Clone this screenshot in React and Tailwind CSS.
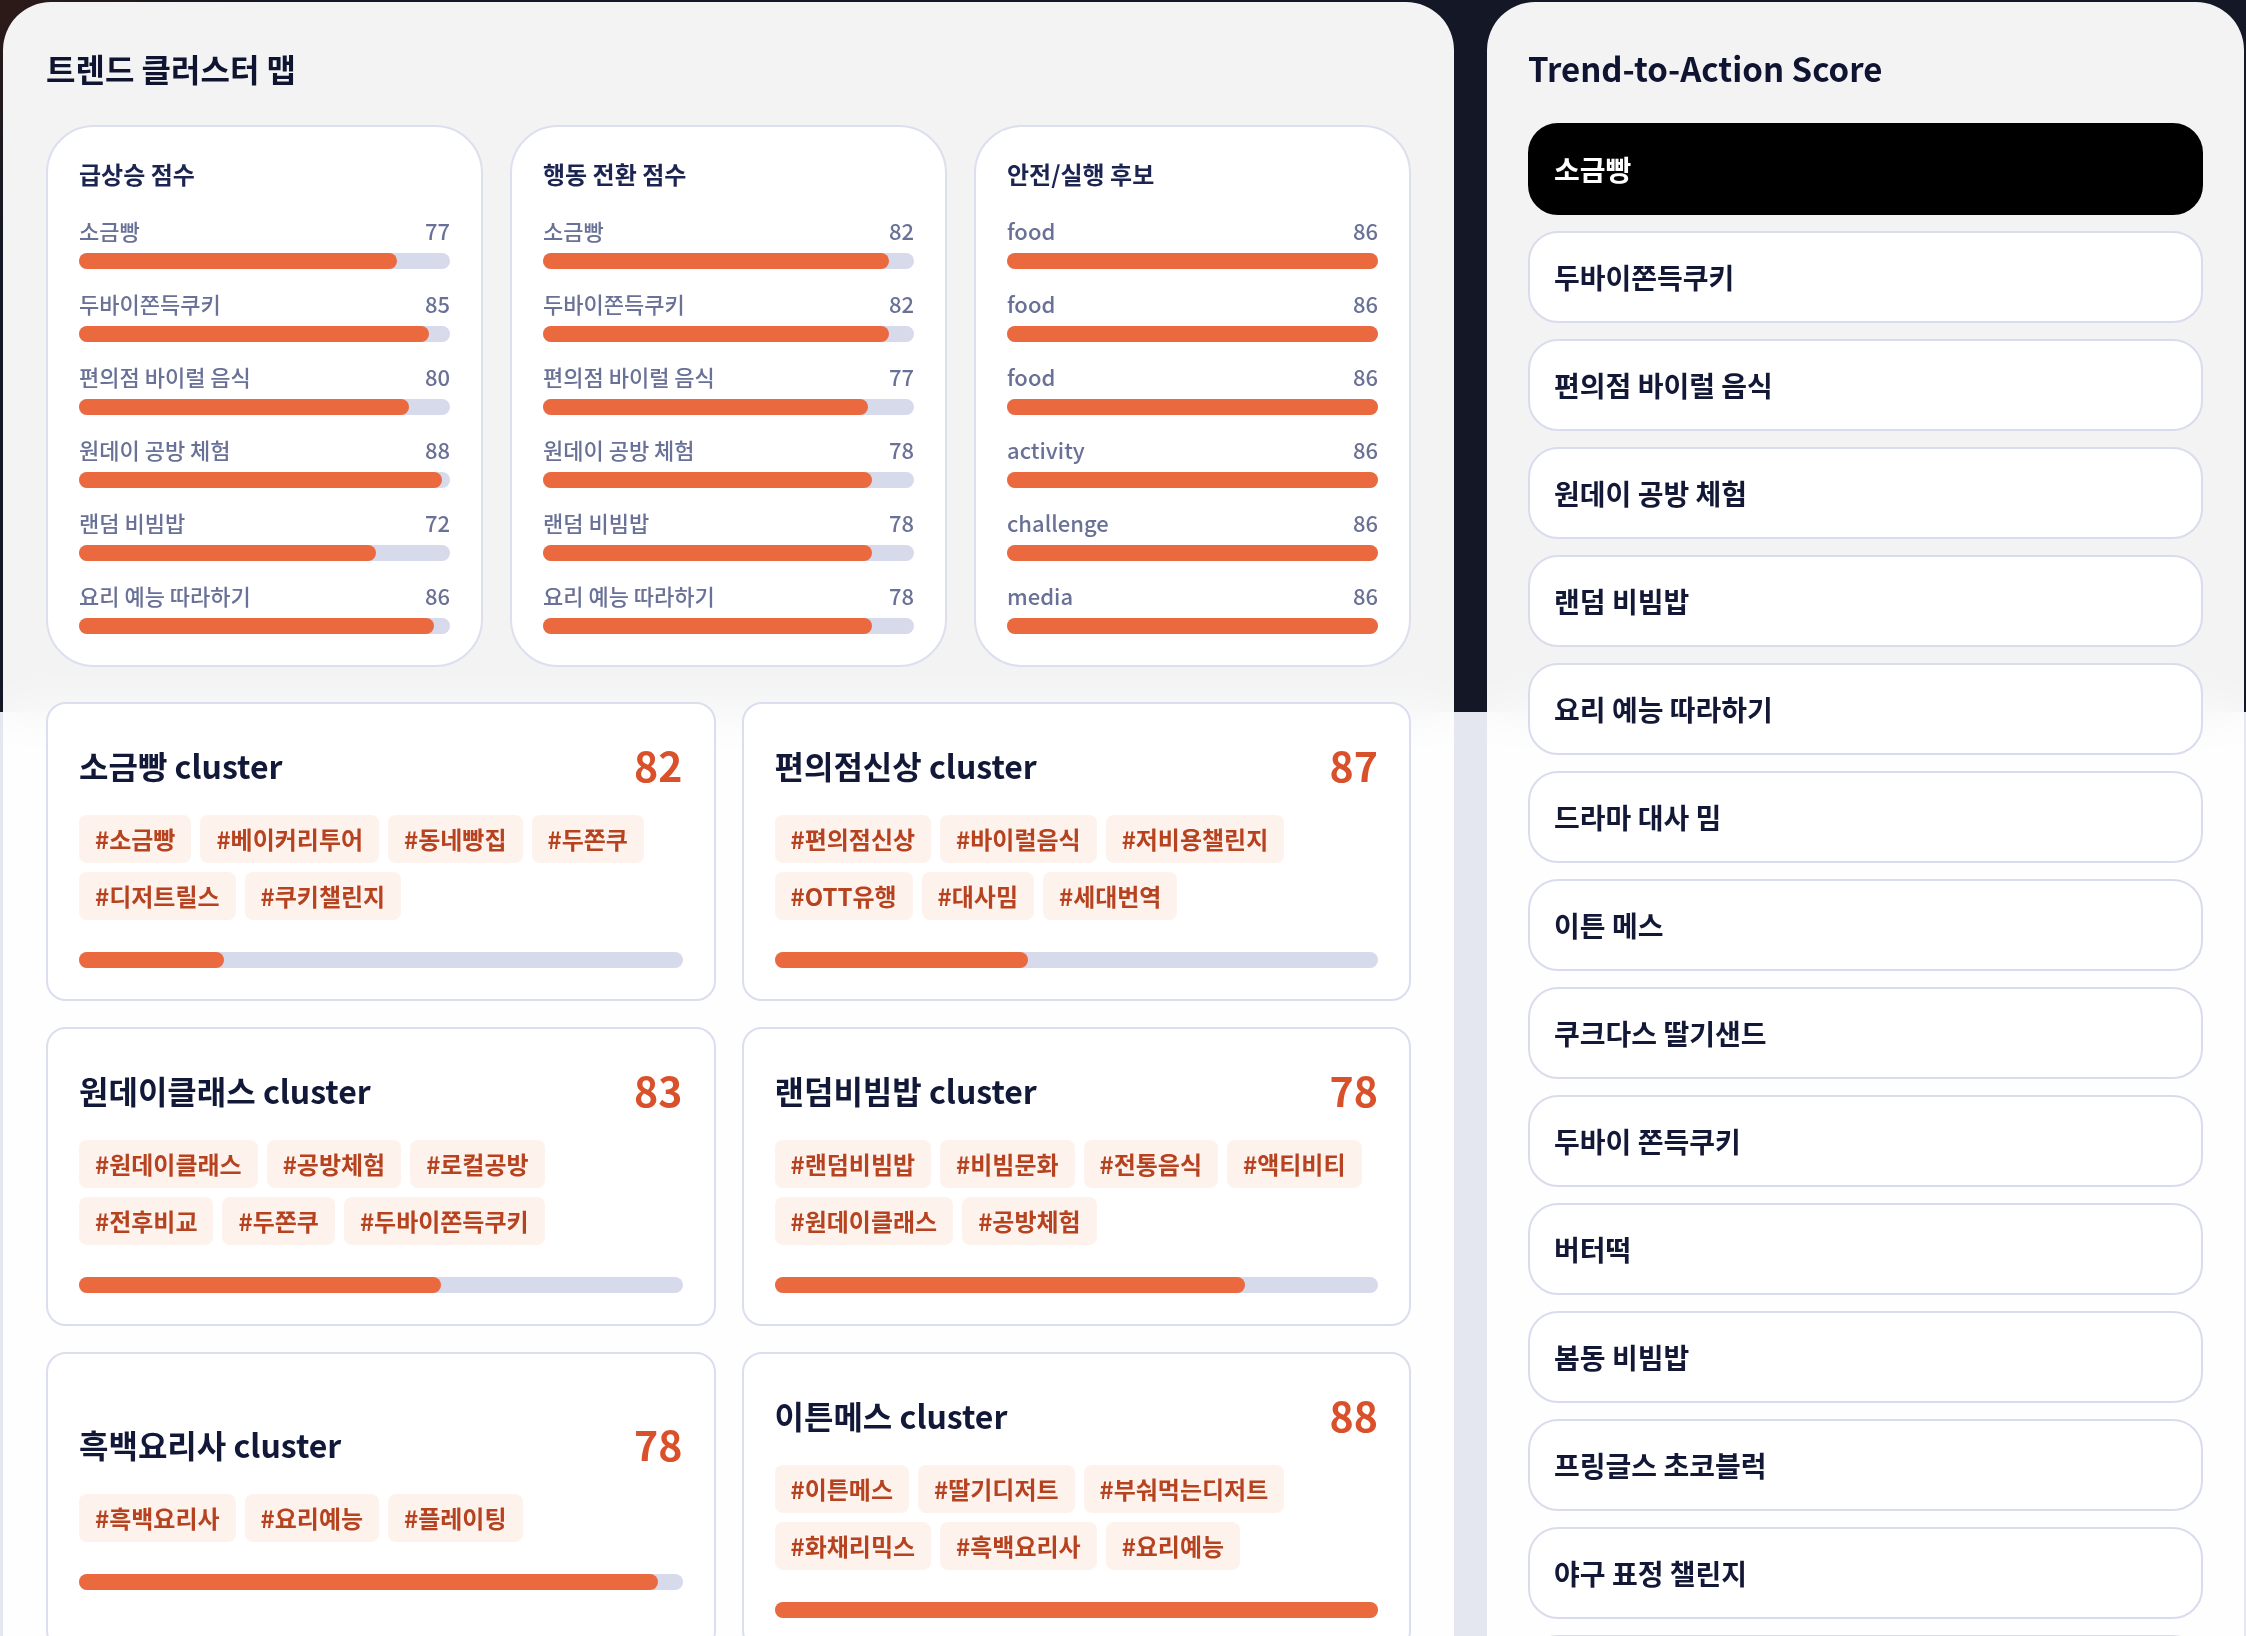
import React from "react";

const scoreCards = [
  {
    title: "급상승 점수",
    rows: [
      {label: "소금빵", value: 77, pct: 85.6},
      {label: "두바이쫀득쿠키", value: 85, pct: 94.4},
      {label: "편의점 바이럴 음식", value: 80, pct: 88.9},
      {label: "원데이 공방 체험", value: 88, pct: 97.8},
      {label: "랜덤 비빔밥", value: 72, pct: 80},
      {label: "요리 예능 따라하기", value: 86, pct: 95.6},
    ],
  },
  {
    title: "행동 전환 점수",
    rows: [
      {label: "소금빵", value: 82, pct: 93.2},
      {label: "두바이쫀득쿠키", value: 82, pct: 93.2},
      {label: "편의점 바이럴 음식", value: 77, pct: 87.5},
      {label: "원데이 공방 체험", value: 78, pct: 88.6},
      {label: "랜덤 비빔밥", value: 78, pct: 88.6},
      {label: "요리 예능 따라하기", value: 78, pct: 88.6},
    ],
  },
  {
    title: "안전/실행 후보",
    rows: [
      {label: "food", value: 86, pct: 100},
      {label: "food", value: 86, pct: 100},
      {label: "food", value: 86, pct: 100},
      {label: "activity", value: 86, pct: 100},
      {label: "challenge", value: 86, pct: 100},
      {label: "media", value: 86, pct: 100},
    ],
  },
];

const clusters = [
  {name: "소금빵", score: 82, pct: 24, tags: ["#소금빵", "#베이커리투어", "#동네빵집", "#두쫀쿠", "#디저트릴스", "#쿠키챌린지"]},
  {name: "편의점신상", score: 87, pct: 42, tags: ["#편의점신상", "#바이럴음식", "#저비용챌린지", "#OTT유행", "#대사밈", "#세대번역"]},
  {name: "원데이클래스", score: 83, pct: 60, tags: ["#원데이클래스", "#공방체험", "#로컬공방", "#전후비교", "#두쫀쿠", "#두바이쫀득쿠키"]},
  {name: "랜덤비빔밥", score: 78, pct: 78, tags: ["#랜덤비빔밥", "#비빔문화", "#전통음식", "#액티비티", "#원데이클래스", "#공방체험"]},
  {name: "흑백요리사", score: 78, pct: 96, tags: ["#흑백요리사", "#요리예능", "#플레이팅"]},
  {name: "이튼메스", score: 88, pct: 100, tags: ["#이튼메스", "#딸기디저트", "#부숴먹는디저트", "#화채리믹스", "#흑백요리사", "#요리예능"]},
];

const actions = [
  "소금빵",
  "두바이쫀득쿠키",
  "편의점 바이럴 음식",
  "원데이 공방 체험",
  "랜덤 비빔밥",
  "요리 예능 따라하기",
  "드라마 대사 밈",
  "이튼 메스",
  "쿠크다스 딸기샌드",
  "두바이 쫀득쿠키",
  "버터떡",
  "봄동 비빔밥",
  "프링글스 초코블럭",
  "야구 표정 챌린지",
  "탕후루 리믹스",
];

function Bar({pct}) {
  return (
      <div className="h-4 w-full rounded-full bg-[#d7daea]">
        <div className="h-4 rounded-full bg-[#ea693e]" style={{width: `${pct}%`}}/>
      </div>
  )
}

function ScoreCard({card}) {
  return (
      <div className="rounded-[48px] border-2 border-[#dcdfee] bg-white px-[31px] pt-[32px] pb-[31px]">
        <h3 className="text-[24px] leading-[30px] font-bold text-[#1c2452]">{card.title}</h3>
        <div className="mt-[28px] flex flex-col gap-[21px]">
          {card.rows.map((row, i) => (
              <div key={i}>
                <div className="flex justify-between text-[22px] leading-[26px] font-medium text-[#6a7197]">
                  <span>{row.label}</span>
                  <span>{row.value}</span>
                </div>
                <div className="mt-[10px]">
                  <Bar pct={row.pct}/>
                </div>
              </div>
          ))}
        </div>
      </div>
  )
}

function ClusterCard({cluster}) {
  return (
      <div className="flex flex-col justify-center rounded-[20px] border-2 border-[#dadeee] bg-white px-[31px] py-[31px]">
        <div className="flex h-[60px] items-center justify-between">
          <h3 className="text-[32px] font-bold text-[#121838]">{cluster.name} cluster</h3>
          <span className="text-[41px] font-bold text-[#d9512b]">{cluster.score}</span>
        </div>
        <div className="mt-[20px] flex max-w-[592px] flex-wrap gap-[9px]">
          {cluster.tags.map((tag, i) => (
              <span key={i}
                    className="flex h-[48px] items-center rounded-[8px] bg-[#fdf2ec] px-4 text-[24px] font-bold text-[#b7421f]">
                {tag}
              </span>
          ))}
        </div>
        <div className="mt-[32px]">
          <Bar pct={cluster.pct}/>
        </div>
      </div>
  )
}

export default function App() {
  return (
      <div
          className="min-h-screen bg-[radial-gradient(circle_at_top_left,#2c1a17_0,transparent_260px),linear-gradient(to_bottom,#141726_712px,#e5e7f0_712px)] pt-[2px] pr-[2px] pl-[3px] font-['Noto_Sans_CJK_KR','Noto_Sans',sans-serif]">
        <div className="grid grid-cols-[1451px_757px] items-start gap-x-[33px]">
          {/* trend cluster map */}
          <section className="rounded-[48px] bg-white/95 px-[43px] pt-[44px] pb-[40px] backdrop-blur-xl">
            <h2 className="text-[32px] leading-[44px] font-bold text-[#0f1431]">트렌드 클러스터 맵</h2>
            <div className="mt-[35px] grid grid-cols-3 gap-[27px]">
              {scoreCards.map((card, i) => <ScoreCard key={i} card={card}/>)}
            </div>
            <div className="mt-[35px] grid grid-cols-2 gap-[26px]">
              {clusters.map((c, i) => <ClusterCard key={i} cluster={c}/>)}
            </div>
          </section>

          {/* score list */}
          <section className="rounded-[48px] bg-white/95 px-[41px] pt-[44px] pb-[40px] backdrop-blur-xl">
            <h2 className="text-[33px] leading-[44px] font-bold text-[#0f1431]">Trend-to-Action Score</h2>
            <div className="mt-[33px] flex flex-col gap-4">
              {actions.map((name, i) => (
                  <div key={i}
                       className={i === 0
                           ? "flex h-[92px] items-center rounded-[30px] border-2 border-black bg-black px-[24px] text-[28px] font-bold text-white"
                           : "flex h-[92px] items-center rounded-[30px] border-2 border-[#d9dcec] bg-white px-[24px] text-[28px] font-bold text-[#121836]"}>
                    {name}
                  </div>
              ))}
            </div>
          </section>
        </div>
      </div>
  )
}
